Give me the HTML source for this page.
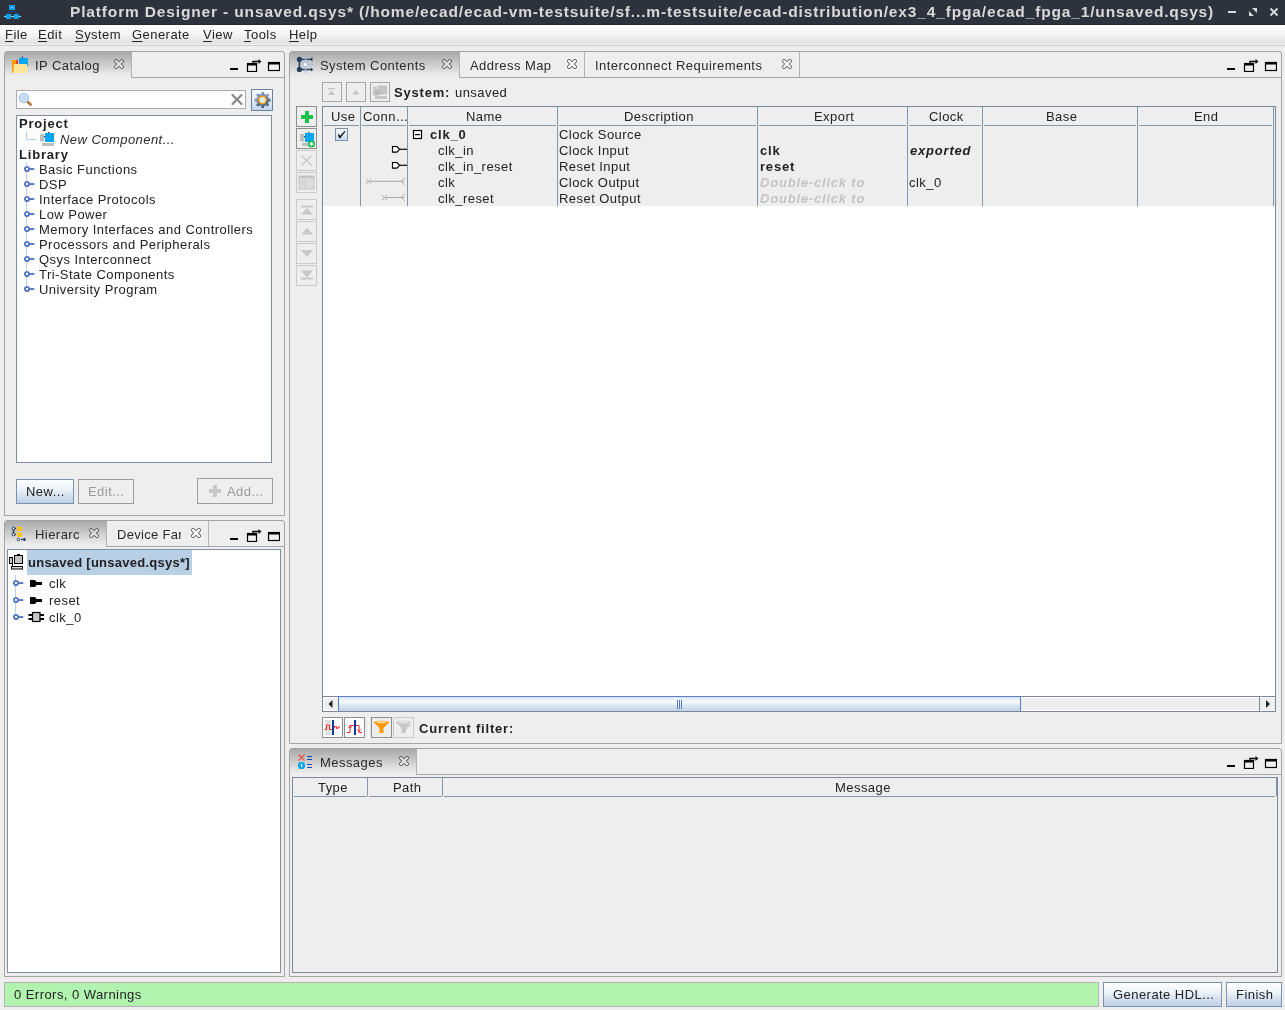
<!DOCTYPE html>
<html><head><meta charset="utf-8">
<style>
*{margin:0;padding:0;box-sizing:border-box}
html,body{width:1285px;height:1010px;overflow:hidden;background:#eeeeee;font-family:"Liberation Sans",sans-serif;font-size:13px;color:#222;position:relative}
.a{position:absolute}
svg.a{overflow:visible}
.t{position:absolute;white-space:nowrap;line-height:15px;font-size:13px;letter-spacing:0.45px;color:#222;filter:grayscale(1)}
.b{font-weight:bold;letter-spacing:0.8px}
.i{font-style:italic}
.u{text-decoration:underline;text-underline-offset:2px;text-decoration-thickness:1px}
.panel{position:absolute;border:1px solid #a3a3a3;border-radius:3px 3px 0 0;background:#eeeeee}
.tabsel{position:absolute;background:linear-gradient(#a9a9a9,#c9c9c9 45%,#e6e6e6 85%,#eeeeee);border-radius:2px 0 0 0}
.strip{position:absolute;height:1px;background:#a6a6a6}
.vsep{position:absolute;width:1px;background:#b3b3b3}
.box{position:absolute;background:#fff;border:1px solid #7d8ea0}
.btn{position:absolute;border:1px solid #7a92ab;background:linear-gradient(#fdfeff,#eef3f9 40%,#d3e0ee 70%,#bfd2e7)}
.btnd{position:absolute;border:1px solid #a6a6a6;background:#eeeeee}
.btnl{position:absolute;border:1px solid #cacaca;background:#eeeeee}
.vl{position:absolute;width:1px;background:#8297ad}
.hl{position:absolute;height:1px;background:#8297ad}
</style></head><body>
<svg width="0" height="0" style="position:absolute">
<defs>
<symbol id="tclose" viewBox="0 0 10 10"><path d="M1.3 0.5 L2.7 0.5 L5 2.6 L7.3 0.5 L8.7 0.5 L9.5 1.3 L9.5 2.7 L7.4 5 L9.5 7.3 L9.5 8.7 L8.7 9.5 L7.3 9.5 L5 7.4 L2.7 9.5 L1.3 9.5 L0.5 8.7 L0.5 7.3 L2.6 5 L0.5 2.7 L0.5 1.3 Z" fill="rgba(255,255,255,0.3)" stroke="#3c3c3c" stroke-width="0.9"/></symbol>
<symbol id="pmin" viewBox="0 0 54 16"><rect x="4" y="12" width="8" height="2" fill="#000"/>
<rect x="21.5" y="7.5" width="9" height="8" fill="none" stroke="#000" stroke-width="1.2"/><rect x="21" y="7" width="10" height="2.5" fill="#000"/>
<path d="M27 7 V5.5 H34" fill="none" stroke="#000" stroke-width="1.3"/><path d="M32.5 3 L35.5 5.5 L32.5 8 Z" fill="#000"/>
<rect x="42.5" y="6.5" width="11" height="8" fill="none" stroke="#000" stroke-width="1.2"/><rect x="42" y="6" width="12" height="2.5" fill="#000"/></symbol>
<symbol id="handle" viewBox="0 0 12 8"><circle cx="3" cy="4" r="2.1" fill="#fff" stroke="#5577c0" stroke-width="1.9"/><rect x="5" y="3.1" width="5" height="1.9" fill="#5577c0"/><rect x="10" y="3.5" width="1.5" height="1" fill="#b0c4e8"/></symbol>
</defs></svg>

<!-- TITLE BAR -->
<div class="a" style="left:0;top:0;width:1285px;height:25px;background:#2e323d;border-bottom:1px solid #262a35"></div>
<svg class="a" style="left:0;top:0" width="26" height="24">
<path d="M8.5 14 V11.5 H16.5 V14" fill="none" stroke="#1a3f80" stroke-width="1.2"/>
<line x1="4" y1="16.5" x2="21" y2="16.5" stroke="#86d9f8" stroke-width="1.2"/>
<rect x="9" y="5" width="6" height="5" fill="#0b9ff0"/><rect x="11.5" y="7" width="1.5" height="1" fill="#bdeaff"/>
<rect x="6" y="14" width="5" height="5" fill="#0b9ff0"/><rect x="14" y="14" width="4.5" height="5" fill="#0ba5f2"/>
</svg>
<div class="t b" style="left:70px;top:4px;font-size:15.5px;letter-spacing:0.85px;color:#d5d9e0">Platform Designer - unsaved.qsys* (/home/ecad/ecad-vm-testsuite/sf...m-testsuite/ecad-distribution/ex3_4_fpga/ecad_fpga_1/unsaved.qsys)</div>
<svg class="a" style="left:1220px;top:0" width="65" height="25">
<rect x="8" y="11" width="8" height="2" fill="#d3d7de"/>
<path d="M32 8 H37 V13 Z M29 11 V16 H34 Z" fill="#d3d7de"/>
<path d="M50.5 8.5 L57.5 15.5 M57.5 8.5 L50.5 15.5" stroke="#d3d7de" stroke-width="2"/>
</svg>

<!-- MENU BAR -->
<div class="a" style="left:0;top:25px;width:1285px;height:19px;background:linear-gradient(#ffffff,#f7f7f7 40%,#e2e2e2)"></div>
<div class="a" style="left:0;top:44px;width:1285px;height:1px;background:#f0f0f0"></div>
<div class="a" style="left:0;top:45px;width:1285px;height:1px;background:#cecece"></div>
<div class="t" style="left:5px;top:27px"><span class="u">F</span>ile</div>
<div class="t" style="left:38px;top:27px"><span class="u">E</span>dit</div>
<div class="t" style="left:75px;top:27px"><span class="u">S</span>ystem</div>
<div class="t" style="left:132px;top:27px"><span class="u">G</span>enerate</div>
<div class="t" style="left:203px;top:27px"><span class="u">V</span>iew</div>
<div class="t" style="left:244px;top:27px"><span class="u">T</span>ools</div>
<div class="t" style="left:289px;top:27px"><span class="u">H</span>elp</div>
<!-- PANEL A: IP CATALOG -->
<div class="panel" style="left:4px;top:51px;width:281px;height:465px"></div>
<div class="tabsel" style="left:5px;top:52px;width:126px;height:25px"></div>
<div class="vsep" style="left:131px;top:52px;height:26px"></div>
<div class="strip" style="left:131px;top:77px;width:153px"></div>
<svg class="a" style="left:8px;top:54px" width="28" height="22">
<path d="M4 6 H10 V19 H4 Z" fill="#ff9a00"/><rect x="8" y="6" width="2" height="5" fill="#f0402a"/>
<rect x="11" y="4" width="9" height="8" fill="#03a6f0"/><rect x="13.6" y="2.6" width="1.4" height="1.4" fill="#1040a0"/>
<path d="M6 10 H19 V19 H5 Z" fill="#ffe59a"/>
</svg>
<div class="t" style="left:35px;top:58px;color:#2a2a2a">IP Catalog</div>
<svg class="a" style="left:114px;top:59px" width="10" height="10"><use href="#tclose"/></svg>
<svg class="a" style="left:226px;top:56px" width="54" height="16"><use href="#pmin"/></svg>

<div class="box" style="left:16px;top:90px;width:230px;height:19px;border-color:#ababab"></div>
<svg class="a" style="left:16px;top:89px" width="30" height="22">
<circle cx="8" cy="9" r="4.6" fill="#c3d9f2" stroke="#a6c4ea" stroke-width="1.3"/>
<circle cx="8" cy="9" r="3.2" fill="none" stroke="#dbe8f7" stroke-width="0.8"/>
<path d="M12.2 13.2 L14.6 15.6" stroke="#b5783a" stroke-width="2.8" stroke-linecap="round"/>
</svg>
<svg class="a" style="left:226px;top:88px" width="20" height="22"><path d="M6.5 7 L15.5 16 M15.5 7 L6.5 16" stroke="#8a8a8a" stroke-width="2.3" stroke-linecap="round"/></svg>
<div class="btn" style="left:251px;top:89px;width:22px;height:22px;border-color:#6a8198;background:linear-gradient(#fafcff,#dfeaf5 50%,#c3d6ea)"></div>
<svg class="a" style="left:251px;top:89px" width="22" height="22">
<defs><linearGradient id="gg" x1="0" y1="0" x2="1" y2="1"><stop offset="0" stop-color="#a9bad0"/><stop offset="0.5" stop-color="#6d84a4"/><stop offset="1" stop-color="#34496a"/></linearGradient></defs>
<g transform="translate(11.5,11)"><g fill="url(#gg)"><circle r="6.4"/>
<rect x="-1.4" y="-8" width="2.8" height="16"/><rect x="-8" y="-1.4" width="16" height="2.8"/>
<rect x="-1.4" y="-8" width="2.8" height="16" transform="rotate(45)"/><rect x="-1.4" y="-8" width="2.8" height="16" transform="rotate(-45)"/></g>
<path d="M0 -3.8 L2.7 -2.7 L3.8 0 L2.7 2.7 L0 3.8 L-2.7 2.7 L-3.8 0 L-2.7 -2.7 Z" fill="#dcecf8" stroke="#ff9a00" stroke-width="1.3"/></g>
</svg>

<div class="box" style="left:16px;top:115px;width:256px;height:348px"></div>
<div class="t b" style="left:19px;top:116px">Project</div>
<svg class="a" style="left:26px;top:130px" width="30" height="17">
<path d="M0.5 1 V9.5 H10" fill="none" stroke="#b9d0ea" stroke-width="1"/>
<rect x="14" y="4" width="4" height="7.5" fill="#bdbdbd"/><rect x="16" y="13" width="12" height="3" fill="#bdbdbd"/>
<rect x="19" y="3" width="9" height="9" fill="#03a6f0"/><rect x="22" y="2" width="1.5" height="1" fill="#1040a0"/><rect x="18" y="6" width="1" height="1.5" fill="#1040a0"/>
</svg>
<div class="t i" style="left:60px;top:132px;color:#2a2a2a">New Component...</div>
<div class="t b" style="left:19px;top:147px">Library</div>
<div class="a" style="left:26px;top:162px;width:1px;height:127px;background:#b9d0ea"></div>
<svg class="a" style="left:24px;top:165px" width="12" height="8"><use href="#handle"/></svg>
<svg class="a" style="left:24px;top:180px" width="12" height="8"><use href="#handle"/></svg>
<svg class="a" style="left:24px;top:195px" width="12" height="8"><use href="#handle"/></svg>
<svg class="a" style="left:24px;top:210px" width="12" height="8"><use href="#handle"/></svg>
<svg class="a" style="left:24px;top:225px" width="12" height="8"><use href="#handle"/></svg>
<svg class="a" style="left:24px;top:240px" width="12" height="8"><use href="#handle"/></svg>
<svg class="a" style="left:24px;top:255px" width="12" height="8"><use href="#handle"/></svg>
<svg class="a" style="left:24px;top:270px" width="12" height="8"><use href="#handle"/></svg>
<svg class="a" style="left:24px;top:285px" width="12" height="8"><use href="#handle"/></svg>
<div class="t" style="left:39px;top:162px">Basic Functions</div>
<div class="t" style="left:39px;top:177px">DSP</div>
<div class="t" style="left:39px;top:192px">Interface Protocols</div>
<div class="t" style="left:39px;top:207px">Low Power</div>
<div class="t" style="left:39px;top:222px">Memory Interfaces and Controllers</div>
<div class="t" style="left:39px;top:237px">Processors and Peripherals</div>
<div class="t" style="left:39px;top:252px">Qsys Interconnect</div>
<div class="t" style="left:39px;top:267px">Tri-State Components</div>
<div class="t" style="left:39px;top:282px">University Program</div>

<div class="btn" style="left:16px;top:479px;width:58px;height:25px"></div>
<div class="t" style="left:26px;top:484px">New...</div>
<div class="btnd" style="left:78px;top:479px;width:56px;height:25px;border-color:#9d9d9d"></div>
<div class="t" style="left:88px;top:484px;color:#9a9a9a">Edit...</div>
<div class="btnd" style="left:197px;top:478px;width:76px;height:26px;border-color:#9d9d9d"></div>
<svg class="a" style="left:209px;top:485px" width="12" height="12"><path d="M4 0 H8 V4 H12 V8 H8 V12 H4 V8 H0 V4 H4 Z" fill="#c8c8c8"/></svg>
<div class="t" style="left:227px;top:484px;color:#9a9a9a">Add...</div>

<!-- PANEL B: HIERARCHY -->
<div class="panel" style="left:4px;top:520px;width:281px;height:457px"></div>
<div class="tabsel" style="left:5px;top:521px;width:101px;height:25px"></div>
<div class="vsep" style="left:106px;top:521px;height:26px"></div>
<div class="vsep" style="left:208px;top:521px;height:26px"></div>
<div class="strip" style="left:106px;top:546px;width:178px"></div>
<svg class="a" style="left:6px;top:522px" width="26" height="22">
<path d="M7.5 6.5 V12.5" stroke="#1f3d5e" stroke-width="1.6"/>
<path d="M6 6.5 H10 M6 12.5 H10" stroke="#1f3d5e" stroke-width="1.4"/>
<circle cx="7.5" cy="6.5" r="1.4" fill="#fff" stroke="#1f3d5e" stroke-width="1"/><circle cx="7.5" cy="12.5" r="1.4" fill="#fff" stroke="#1f3d5e" stroke-width="1"/>
<path d="M11 4 H13 L14 5 H16 V9 H11 Z" fill="#ffc41a"/><path d="M11 10 H13 L14 11 H16 V15 H11 Z" fill="#ffc41a"/>
<circle cx="12.5" cy="17.5" r="1.3" fill="#fff" stroke="#1f3d5e" stroke-width="1"/><path d="M15 17.5 H17.5" stroke="#1f3d5e" stroke-width="1.3"/><rect x="17.5" y="16" width="2" height="3" fill="#1f3d5e"/>
</svg>
<div class="t" style="left:35px;top:527px;color:#2a2a2a;width:44px;overflow:hidden">Hierarchy</div>
<svg class="a" style="left:89px;top:528px" width="10" height="10"><use href="#tclose"/></svg>
<div class="t" style="left:117px;top:527px;color:#2a2a2a;width:64px;overflow:hidden;letter-spacing:0.3px">Device Family</div>
<svg class="a" style="left:191px;top:528px" width="10" height="10"><use href="#tclose"/></svg>
<svg class="a" style="left:226px;top:526px" width="54" height="16"><use href="#pmin"/></svg>

<div class="box" style="left:7px;top:549px;width:274px;height:424px"></div>
<div class="a" style="left:27px;top:550px;width:165px;height:25px;background:#b8cfe5"></div>
<svg class="a" style="left:8px;top:553px" width="18" height="18">
<rect x="1.5" y="4.5" width="3" height="6" fill="#ccc" stroke="#000" stroke-width="1"/>
<rect x="6.5" y="2.5" width="8" height="8" fill="#c4c4c4" stroke="#000" stroke-width="1"/><rect x="9" y="1" width="3" height="1.5" fill="#000"/>
<path d="M4.5 10.5 V13.5 H14.5" fill="none" stroke="#000"/><rect x="3.5" y="13.5" width="11" height="2.5" fill="#ddd" stroke="#000" stroke-width="1"/>
</svg>
<div class="t b" style="left:28px;top:555px;font-size:13px;letter-spacing:0.25px;color:#222">unsaved [unsaved.qsys*]</div>
<div class="a" style="left:15px;top:575px;width:1px;height:42px;background:#b9d0ea"></div>
<svg class="a" style="left:13px;top:579px" width="12" height="8"><use href="#handle"/></svg>
<svg class="a" style="left:13px;top:596px" width="12" height="8"><use href="#handle"/></svg>
<svg class="a" style="left:13px;top:613px" width="12" height="8"><use href="#handle"/></svg>
<svg class="a" style="left:29px;top:578px" width="16" height="12"><path d="M1 2 H6 L7.5 4 H13 V7 H7.5 L6 9 H1 Z" fill="#000"/></svg>
<svg class="a" style="left:29px;top:595px" width="16" height="12"><path d="M1 2 H6 L7.5 4 H13 V7 H7.5 L6 9 H1 Z" fill="#000"/></svg>
<svg class="a" style="left:28px;top:611px" width="18" height="12"><rect x="0.5" y="3" width="4" height="2" fill="#000"/><rect x="0.5" y="7" width="4" height="2" fill="#000"/><rect x="12" y="3" width="4" height="2" fill="#000"/><rect x="12" y="7" width="4" height="2" fill="#000"/><rect x="4.5" y="1.5" width="7.5" height="9" fill="#c8c8c8" stroke="#000" stroke-width="1.2"/></svg>
<div class="t" style="left:49px;top:576px">clk</div>
<div class="t" style="left:49px;top:593px">reset</div>
<div class="t" style="left:49px;top:610px">clk_0</div>

<!-- STATUS -->
<div class="a" style="left:4px;top:982px;width:1095px;height:25px;background:#b3f3b0;border:1px solid #b4b4b4"></div>
<div class="t" style="left:14px;top:987px">0 Errors, 0 Warnings</div>
<div class="btn" style="left:1103px;top:982px;width:119px;height:25px"></div>
<div class="t" style="left:1113px;top:987px">Generate HDL...</div>
<div class="btn" style="left:1226px;top:982px;width:56px;height:25px"></div>
<div class="t" style="left:1236px;top:987px">Finish</div>
<!-- PANEL C: SYSTEM CONTENTS -->
<div class="panel" style="left:289px;top:51px;width:993px;height:693px"></div>
<div class="tabsel" style="left:290px;top:52px;width:169px;height:25px"></div>
<div class="vsep" style="left:459px;top:52px;height:26px"></div>
<div class="vsep" style="left:584px;top:52px;height:26px"></div>
<div class="vsep" style="left:799px;top:52px;height:26px"></div>
<div class="strip" style="left:459px;top:77px;width:822px"></div>
<svg class="a" style="left:292px;top:54px" width="28" height="22">
<path d="M7.4 5.3 V15.5" stroke="#233f5f" stroke-width="1.6"/>
<path d="M7.4 5.3 H19.5 M7.4 15.5 H19.5" stroke="#233f5f" stroke-width="1.3"/>
<path d="M20.5 3.8 L19 5.3 L20.5 6.8" fill="none" stroke="#233f5f" stroke-width="1.4"/><path d="M19 13.5 L21.2 15.5 L19 17.5 Z" fill="#233f5f"/>
<circle cx="7.4" cy="5.3" r="2.6" fill="#233f5f"/><circle cx="7.4" cy="15.5" r="2.6" fill="#233f5f"/>
<path d="M13.5 3 V19" stroke="#a9c0e0" stroke-width="1.3"/><path d="M15.5 10.5 H20.5" stroke="#a9c0e0" stroke-width="1.3"/><path d="M19.5 8.8 L21.3 10.5 L19.5 12.2 Z" fill="#a9c0e0"/>
<rect x="11.6" y="8.6" width="3.8" height="3.8" fill="#fff" stroke="#a9c0e0" stroke-width="1"/>
</svg>
<div class="t" style="left:320px;top:58px;color:#2a2a2a">System Contents</div>
<svg class="a" style="left:442px;top:59px" width="10" height="10"><use href="#tclose"/></svg>
<div class="t" style="left:470px;top:58px;color:#2a2a2a">Address Map</div>
<svg class="a" style="left:567px;top:59px" width="10" height="10"><use href="#tclose"/></svg>
<div class="t" style="left:595px;top:58px;color:#2a2a2a">Interconnect Requirements</div>
<svg class="a" style="left:782px;top:59px" width="10" height="10"><use href="#tclose"/></svg>
<svg class="a" style="left:1223px;top:56px" width="54" height="16"><use href="#pmin"/></svg>

<div class="btnd" style="left:322px;top:82px;width:20px;height:20px"></div>
<svg class="a" style="left:322px;top:82px" width="20" height="20"><rect x="6" y="6" width="7" height="1.5" fill="#c4c4c4"/><path d="M6 13 L9.5 8.5 L13 13 Z" fill="#c4c4c4"/></svg>
<div class="btnd" style="left:346px;top:82px;width:20px;height:20px"></div>
<svg class="a" style="left:346px;top:82px" width="20" height="20"><path d="M6 12.5 L9.8 8 L13.5 12.5 Z" fill="#c4c4c4"/></svg>
<div class="btnd" style="left:370px;top:82px;width:20px;height:20px"></div>
<svg class="a" style="left:370px;top:82px" width="20" height="20"><rect x="3" y="4.5" width="4" height="9" fill="#c8c8c8"/><rect x="8" y="3.5" width="9" height="9" fill="#c4c4c4"/><rect x="5" y="14" width="12" height="3" fill="#c8c8c8"/><circle cx="7.5" cy="10.5" r="3" fill="#bbb"/></svg>
<div class="t b" style="left:394px;top:85px">System:</div>
<div class="t" style="left:455px;top:85px">unsaved</div>

<div class="btnd" style="left:296px;top:106px;width:21px;height:21px;border-color:#8e8e8e"></div>
<svg class="a" style="left:296px;top:106px" width="21" height="21"><path d="M9 5 H13 V9 H17 V13 H13 V17 H9 V13 H5 V9 H9 Z" fill="#1dc24b"/></svg>
<div class="btnd" style="left:296px;top:128px;width:21px;height:21px;border-color:#8e8e8e"></div>
<svg class="a" style="left:296px;top:128px" width="21" height="21">
<rect x="4" y="6" width="4" height="7.5" fill="#bdbdbd"/><rect x="6" y="15" width="8" height="3" fill="#bdbdbd"/>
<rect x="9" y="5" width="9" height="9" fill="#03a6f0"/><rect x="12" y="4" width="1.5" height="1" fill="#1040a0"/><rect x="8" y="8" width="1" height="1.5" fill="#1040a0"/>
<circle cx="15.5" cy="16" r="3.6" fill="#1dbf4a"/><path d="M15.5 14 V18 M13.5 16 H17.5" stroke="#fff" stroke-width="1.3"/>
</svg>
<div class="btnl" style="left:296px;top:150px;width:21px;height:21px"></div>
<svg class="a" style="left:296px;top:150px" width="21" height="21"><path d="M5.5 5.5 L15.5 15.5 M15.5 5.5 L5.5 15.5" stroke="#c4c4c4" stroke-width="1.1"/></svg>
<div class="btnl" style="left:296px;top:172px;width:21px;height:21px"></div>
<svg class="a" style="left:296px;top:172px" width="21" height="21"><rect x="3" y="4" width="15" height="13" fill="#dcdcdc" stroke="#c4c4c4"/><rect x="3" y="4" width="15" height="2" fill="#c4c4c4"/><path d="M5 9 H8 M5 12 H8 M9 8 V16" stroke="#c8c8c8"/></svg>
<div class="btnl" style="left:296px;top:199px;width:21px;height:21px"></div>
<svg class="a" style="left:296px;top:199px" width="21" height="21"><rect x="5" y="6.5" width="12" height="2" fill="#c8c8c8"/><path d="M5 15.5 L11 9 L17 15.5 Z" fill="#c8c8c8"/></svg>
<div class="btnl" style="left:296px;top:221px;width:21px;height:21px"></div>
<svg class="a" style="left:296px;top:221px" width="21" height="21"><path d="M5 13.5 L11 7 L17 13.5 Z" fill="#c8c8c8"/></svg>
<div class="btnl" style="left:296px;top:243px;width:21px;height:21px"></div>
<svg class="a" style="left:296px;top:243px" width="21" height="21"><path d="M5 7 L17 7 L11 14 Z" fill="#c8c8c8"/></svg>
<div class="btnl" style="left:296px;top:265px;width:21px;height:21px"></div>
<svg class="a" style="left:296px;top:265px" width="21" height="21"><path d="M5 5.5 L17 5.5 L11 12.5 Z" fill="#c8c8c8"/><rect x="5" y="12.5" width="12" height="2" fill="#c8c8c8"/></svg>

<!-- TABLE -->
<div class="box" style="left:322px;top:106px;width:954px;height:606px;border-color:#7a8a9c"></div>
<div class="a" style="left:323px;top:107px;width:952px;height:99px;background:#eeeeee"></div>
<div class="hl" style="left:324px;top:125px;width:35px"></div>
<div class="hl" style="left:362px;top:125px;width:44px"></div>
<div class="hl" style="left:409px;top:125px;width:147px"></div>
<div class="hl" style="left:559px;top:125px;width:197px"></div>
<div class="hl" style="left:759px;top:125px;width:147px"></div>
<div class="hl" style="left:909px;top:125px;width:72px"></div>
<div class="hl" style="left:984px;top:125px;width:152px"></div>
<div class="hl" style="left:1139px;top:125px;width:133px"></div>
<div class="vl" style="left:360px;top:107px;height:99px"></div>
<div class="vl" style="left:407px;top:107px;height:99px"></div>
<div class="vl" style="left:557px;top:107px;height:99px"></div>
<div class="vl" style="left:757px;top:107px;height:99px"></div>
<div class="vl" style="left:907px;top:107px;height:99px"></div>
<div class="vl" style="left:982px;top:107px;height:99px"></div>
<div class="vl" style="left:1137px;top:107px;height:99px"></div>
<div class="vl" style="left:1273px;top:107px;height:99px"></div>
<div class="t" style="left:331px;top:109px">Use</div>
<div class="t" style="left:363px;top:109px">Conn...</div>
<div class="t" style="left:466px;top:109px">Name</div>
<div class="t" style="left:624px;top:109px">Description</div>
<div class="t" style="left:814px;top:109px">Export</div>
<div class="t" style="left:929px;top:109px">Clock</div>
<div class="t" style="left:1046px;top:109px">Base</div>
<div class="t" style="left:1194px;top:109px">End</div>

<div class="a" style="left:335px;top:128px;width:13px;height:13px;border:1px solid #7890a8;background:linear-gradient(#f4f8fc,#c9dbee)"></div>
<svg class="a" style="left:335px;top:128px" width="13" height="13"><path d="M2.8 6.8 L4.2 6.2 L5 8 L9.5 3 L10.5 3.6 L5.2 10.2 L4.3 10.2 Z" fill="#111"/></svg>
<svg class="a" style="left:412px;top:129px" width="11" height="11"><rect x="1.5" y="1.5" width="8" height="8" fill="#fff" stroke="#000" stroke-width="1.2"/><rect x="3" y="5" width="5" height="1.2" fill="#000"/></svg>
<svg class="a" style="left:390px;top:144px" width="18" height="10"><path d="M2.5 2.5 H7 L9.5 5.3 L7 8.2 H2.5 Z" fill="#fff" stroke="#000" stroke-width="1.2"/><path d="M9.5 5.3 H17" stroke="#000" stroke-width="1.2"/></svg>
<svg class="a" style="left:390px;top:160px" width="18" height="10"><path d="M2.5 2.5 H7 L9.5 5.3 L7 8.2 H2.5 Z" fill="#fff" stroke="#000" stroke-width="1.2"/><path d="M9.5 5.3 H17" stroke="#000" stroke-width="1.2"/></svg>
<svg class="a" style="left:364px;top:176px" width="44" height="12"><path d="M2 2.8 L7 7.8 M7 2.8 L2 7.8 M6 5.3 H40.5 M41 1.6 L37.3 5.3 L41 9" fill="none" stroke="#a0a0a0" stroke-width="0.9"/></svg>
<svg class="a" style="left:380px;top:192px" width="28" height="12"><path d="M2 3 L7 8 M7 3 L2 8 M6 5.5 H24.5 M25 1.8 L21.3 5.5 L25 9.2" fill="none" stroke="#a0a0a0" stroke-width="0.9"/></svg>

<div class="t b" style="left:430px;top:127px">clk_0</div>
<div class="t" style="left:438px;top:143px">clk_in</div>
<div class="t" style="left:438px;top:159px">clk_in_reset</div>
<div class="t" style="left:438px;top:175px">clk</div>
<div class="t" style="left:438px;top:191px">clk_reset</div>
<div class="t" style="left:559px;top:127px">Clock Source</div>
<div class="t" style="left:559px;top:143px">Clock Input</div>
<div class="t" style="left:559px;top:159px">Reset Input</div>
<div class="t" style="left:559px;top:175px">Clock Output</div>
<div class="t" style="left:559px;top:191px">Reset Output</div>
<div class="t b" style="left:760px;top:143px">clk</div>
<div class="t b" style="left:760px;top:159px">reset</div>
<div class="t b i" style="left:760px;top:175px;color:#c4c4c4">Double-click to</div>
<div class="t b i" style="left:760px;top:191px;color:#c4c4c4">Double-click to</div>
<div class="t b i" style="left:910px;top:143px">exported</div>
<div class="t" style="left:909px;top:175px">clk_0</div>

<!-- scrollbar -->
<div class="a" style="left:323px;top:696px;width:952px;height:1px;background:#7a8a9c"></div>
<div class="a" style="left:323px;top:697px;width:952px;height:14px;background:#eeeeee;border:1px solid #fff;border-right:none"></div>
<svg class="a" style="left:323px;top:697px" width="16" height="14"><path d="M9.5 3 L5.5 7 L9.5 11 Z" fill="#222"/></svg>
<div class="a" style="left:338px;top:696px;width:683px;height:15px;background:linear-gradient(#d9e6f6,#f9fbfe 35%,#dbe6f2 60%,#bfd3e8);border:1px solid #5c7ec2;border-bottom:none"></div>
<div class="a" style="left:677px;top:700px;width:1px;height:9px;background:#5a7ec2"></div>
<div class="a" style="left:679px;top:700px;width:1px;height:9px;background:#5a7ec2"></div>
<div class="a" style="left:681px;top:700px;width:1px;height:9px;background:#5a7ec2"></div>
<div class="a" style="left:1259px;top:697px;width:1px;height:14px;background:#7a8a9c"></div>
<svg class="a" style="left:1260px;top:697px" width="15" height="14"><path d="M6 3 L10 7 L6 11 Z" fill="#222"/></svg>
<div class="a" style="left:323px;top:711px;width:953px;height:1px;background:#7a8a9c"></div>

<!-- filter bar -->
<div class="a" style="left:322px;top:717px;width:21px;height:21px;border:1px solid #8e8e8e;background:#fff"></div>
<svg class="a" style="left:322px;top:717px" width="21" height="21"><rect x="3" y="3" width="6" height="15" fill="#e0e0dc"/><path d="M2.5 12.5 H4.5 V8 H7.5 V12.5 H11 V11 H12.5 V9.5 H14.5 V11.5 H16 V10 H18" fill="none" stroke="#f02828" stroke-width="1"/><rect x="10" y="3" width="2" height="15" fill="#0a3aa8"/></svg>
<div class="a" style="left:344px;top:717px;width:21px;height:21px;border:1px solid #8e8e8e;background:#fff"></div>
<svg class="a" style="left:344px;top:717px" width="21" height="21"><path d="M3 15.5 H6 V8.5 H15 V15.5 H18" fill="none" stroke="#f02828" stroke-width="1"/><path d="M4.5 11 L6 9 L7.5 11 M13.5 12.5 L15 14.5 L16.5 12.5" fill="none" stroke="#f02828" stroke-width="1"/><rect x="10" y="3" width="2" height="15" fill="#0a3aa8"/></svg>
<div class="a" style="left:366px;top:718px;width:5px;height:20px;background:linear-gradient(90deg,#e4e4e4,#fafafa,#dedede)"></div>
<div class="a" style="left:371px;top:717px;width:21px;height:21px;border:1px solid #8e8e8e;background:#eeeeee"></div>
<svg class="a" style="left:371px;top:717px" width="21" height="21"><path d="M2.5 5 Q10.5 2.5 18.5 5 L12.5 11 V16 H8.5 V11 Z" fill="#ff9800"/><ellipse cx="10.5" cy="5.2" rx="5" ry="1" fill="#ffe0a8"/></svg>
<div class="btnl" style="left:393px;top:717px;width:21px;height:21px"></div>
<svg class="a" style="left:393px;top:717px" width="21" height="21"><path d="M2.5 5 Q10.5 2.5 18.5 5 L12.5 11 V16 H8.5 V11 Z" fill="#c8c8c8"/><ellipse cx="10.5" cy="5.2" rx="5" ry="1" fill="#e8e8e8"/><path d="M10 15 L17 8" stroke="#b0b0b0" stroke-width="1"/></svg>
<div class="t b" style="left:419px;top:721px">Current filter:</div>

<!-- PANEL D: MESSAGES -->
<div class="panel" style="left:289px;top:748px;width:993px;height:229px"></div>
<div class="tabsel" style="left:290px;top:749px;width:126px;height:25px"></div>
<div class="vsep" style="left:416px;top:749px;height:26px"></div>
<div class="strip" style="left:416px;top:774px;width:865px"></div>
<svg class="a" style="left:292px;top:750px" width="24" height="22">
<path d="M6.4 4.5 L12.5 10.6 M12.5 4.5 L6.4 10.6" stroke="#f04a3a" stroke-width="1.2"/>
<circle cx="9.5" cy="15.5" r="3.6" fill="#08a4ee"/><rect x="9" y="13.8" width="1.2" height="3.2" fill="#fff"/>
<path d="M15.2 6.5 H19.9 M15.2 9.5 H19.9 M15.2 14.5 H19.9 M15.2 17.5 H19.9" stroke="#0a40a8" stroke-width="1.2"/>
</svg>
<div class="t" style="left:320px;top:755px;color:#2a2a2a">Messages</div>
<svg class="a" style="left:399px;top:756px" width="10" height="10"><use href="#tclose"/></svg>
<svg class="a" style="left:1223px;top:753px" width="54" height="16"><use href="#pmin"/></svg>
<div class="a" style="left:292px;top:777px;width:986px;height:196px;border:1px solid #7a8a9c;background:#eeeeee"></div>
<div class="hl" style="left:294px;top:796px;width:73px"></div>
<div class="hl" style="left:369px;top:796px;width:73px"></div>
<div class="hl" style="left:444px;top:796px;width:831px"></div>
<div class="vl" style="left:367px;top:778px;height:18px"></div>
<div class="vl" style="left:442px;top:778px;height:18px"></div>
<div class="vl" style="left:1276px;top:778px;height:18px"></div>
<div class="t" style="left:318px;top:780px">Type</div>
<div class="t" style="left:393px;top:780px">Path</div>
<div class="t" style="left:835px;top:780px">Message</div>

</body></html>
